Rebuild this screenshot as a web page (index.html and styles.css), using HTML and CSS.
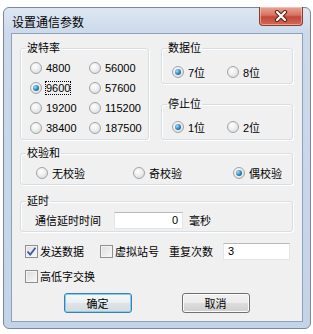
FILE: index.html
```html
<!DOCTYPE html>
<html lang="zh-CN">
<head>
    <meta charset="UTF-8">
    <meta name="viewport" content="width=device-width, initial-scale=1.0">
    <title>设置通信参数</title>
    <link rel="stylesheet" href="styles.css">
</head>
<body>
    <div class="window">
        <div class="titlebar">
            <span class="title">设置通信参数</span>
            <span class="close">
                <svg width="14" height="12" viewBox="0 0 14 12">
                    <path d="M3 2 L11 10 M11 2 L3 10" stroke="#5b2019" stroke-width="4.2" stroke-linecap="round"/>
                    <path d="M3 2 L11 10 M11 2 L3 10" stroke="#ffffff" stroke-width="2.2" stroke-linecap="round"/>
                </svg>
            </span>
        </div>

        <div class="client">
            <div class="top-row">
                <!-- 波特率 -->
                <fieldset class="group baud">
                    <legend>波特率</legend>
                    <div class="opts baud-opts">
                        <label class="opt"><span class="rb"></span>4800</label>
                        <label class="opt"><span class="rb"></span>56000</label>
                        <label class="opt"><span class="rb on"></span><span class="focus">9600</span></label>
                        <label class="opt"><span class="rb"></span>57600</label>
                        <label class="opt"><span class="rb"></span>19200</label>
                        <label class="opt"><span class="rb"></span>115200</label>
                        <label class="opt"><span class="rb"></span>38400</label>
                        <label class="opt"><span class="rb"></span>187500</label>
                    </div>
                </fieldset>

                <div class="side">
                    <fieldset class="group bits">
                        <legend>数据位</legend>
                        <div class="opts pair-opts">
                            <label class="opt"><span class="rb on"></span>7位</label>
                            <label class="opt"><span class="rb"></span>8位</label>
                        </div>
                    </fieldset>

                    <fieldset class="group stop">
                        <legend>停止位</legend>
                        <div class="opts pair-opts">
                            <label class="opt"><span class="rb on"></span>1位</label>
                            <label class="opt"><span class="rb"></span>2位</label>
                        </div>
                    </fieldset>
                </div>
            </div>

            <!-- 校验和 -->
            <fieldset class="group parity">
                <legend>校验和</legend>
                <div class="opts parity-opts">
                    <label class="opt"><span class="rb"></span>无校验</label>
                    <label class="opt"><span class="rb"></span>奇校验</label>
                    <label class="opt"><span class="rb on"></span>偶校验</label>
                </div>
            </fieldset>

            <!-- 延时 -->
            <fieldset class="group delay">
                <legend>延时</legend>
                <div class="delay-row">
                    <span>通信延时时间</span>
                    <span class="field delay-field">0</span>
                    <span class="unit">毫秒</span>
                </div>
            </fieldset>

            <div class="checks">
                <label class="chk"><span class="cb">
                    <svg width="11" height="11" viewBox="0 0 11 11"><path d="M1.5 5.5 L4.2 8.5 L9.5 1.8" fill="none" stroke="#3d5a9e" stroke-width="1.8"/></svg>
                </span>发送数据</label>
                <label class="chk virtual"><span class="cb"></span>虚拟站号</label>
                <span class="repeat">重复次数</span>
                <span class="field repeat-field">3</span>
            </div>

            <div class="checks second">
                <label class="chk"><span class="cb"></span>高低字交换</label>
            </div>

            <div class="buttons">
                <button type="button" class="btn default">确定</button>
                <button type="button" class="btn">取消</button>
            </div>
        </div>
    </div>
</body>
</html>
```

FILE: styles.css
```css
/* Общие стили */
body {
    margin: 0;
    background-color: #ffffff;
    font-family: "Liberation Sans", "Noto Sans CJK SC", sans-serif;
    font-size: 11px;
    color: #000000;
}

/* Окно */
.window {
    width: 306px;
    margin: 7px 0 0 3px;
    border: 1px solid #7c8898;
    border-radius: 6px;
    background: linear-gradient(#dde7f3 0, #cbd9ea 26px, #c4d4e8 100%);
    padding-bottom: 6px;
}

.titlebar {
    height: 25px;
    display: flex;
    justify-content: space-between;
    align-items: flex-start;
    padding: 0 7px 0 8px;
}

.title {
    font-size: 12px;
    line-height: 14px;
    margin-top: 8px;
}

.close {
    width: 42px;
    height: 18px;
    margin-top: -1px;
    display: flex;
    align-items: center;
    justify-content: center;
    border: 1px solid #8a3b31;
    border-top: none;
    border-radius: 0 0 4px 4px;
    background: linear-gradient(#e9a596 0, #d8735f 45%, #c4473a 55%, #d06a55 100%);
    box-shadow: inset 0 0 0 1px rgba(255, 220, 210, 0.5);
}

/* Клиентская область */
.client {
    margin: 0 7px;
    border: 1px solid #8ea1b8;
    background-color: #f0f0f0;
    padding: 8px 9px 8px 8px;
}

.top-row {
    display: grid;
    grid-template-columns: 129px 132px;
    column-gap: 12px;
}

.side {
    display: flex;
    flex-direction: column;
    gap: 14px;
}

/* Группы */
.group {
    margin: 0;
    padding: 0;
    min-width: 0;
    border: 1px solid #d5dfe5;
    border-radius: 3px;
    box-shadow: inset 1px 1px 0 #ffffff, 1px 1px 0 #ffffff;
}

.group legend {
    margin-left: 5px;
    padding: 0 1px;
    line-height: 13px;
}

.opts {
    display: grid;
}

.opt {
    display: flex;
    align-items: center;
    gap: 4px;
    height: 20px;
    white-space: nowrap;
}

.baud-opts {
    grid-template-columns: 59px auto;
    padding: 3px 0 0 9px;
}

.pair-opts {
    grid-template-columns: 55px auto;
    padding-left: 10px;
}

.bits .pair-opts {
    padding-top: 7px;
    padding-bottom: 1px;
}

.stop .pair-opts {
    padding-top: 6px;
    padding-bottom: 2px;
}

.parity {
    margin-top: 7px;
}

.parity-opts {
    grid-template-columns: 97px 100px auto;
    padding: 3px 0 1px 15px;
}

.focus {
    outline: 1px dotted #000000;
    line-height: 12px;
}

/* Радиокнопки */
.rb {
    position: relative;
    flex: none;
    width: 10px;
    height: 10px;
    border: 1px solid #a0a4a8;
    border-radius: 50%;
    background: radial-gradient(circle at 40% 35%, #ffffff 0, #eeeeee 45%, #d2d4d6 100%);
}

.rb.on::after {
    content: "";
    position: absolute;
    left: 2px;
    top: 2px;
    width: 6px;
    height: 6px;
    border-radius: 50%;
    background: radial-gradient(circle at 35% 35%, #a6e0fa 0, #2f8ac4 50%, #123f6b 100%);
}

/* Задержка */
.delay {
    margin-top: 10px;
}

.delay-row {
    display: flex;
    align-items: center;
    height: 18px;
    padding: 3px 0 2px 14px;
}

.field {
    box-sizing: border-box;
    height: 17px;
    line-height: 15px;
    background-color: #ffffff;
    border: 1px solid #e2e6ea;
    border-top-color: #b5b9be;
}

.delay-field {
    width: 69px;
    margin-left: 13px;
    text-align: right;
    padding-right: 4px;
}

.unit {
    margin-left: 6px;
}

/* Флажки */
.checks {
    display: flex;
    align-items: center;
    height: 16px;
    margin-top: 11px;
    padding-left: 5px;
}

.checks.second {
    margin-top: 9px;
}

.chk {
    display: flex;
    align-items: center;
    gap: 2px;
}

.cb {
    flex: none;
    width: 11px;
    height: 11px;
    border: 1px solid #8f8f8f;
    display: flex;
    align-items: center;
    justify-content: center;
    background: linear-gradient(135deg, #dcdcdc, #f8f8f8);
    box-shadow: inset 0 0 0 1px #f4f4f4;
}

.virtual {
    margin-left: 16px;
}

.repeat {
    margin-left: 10px;
}

.repeat-field {
    width: 67px;
    margin-left: 10px;
    padding-left: 4px;
}

/* Кнопки */
.buttons {
    display: flex;
    justify-content: center;
    gap: 50px;
    margin-top: 9px;
}

.btn {
    width: 68px;
    height: 20px;
    padding: 0;
    font-family: inherit;
    font-size: 11px;
    color: #000000;
    border: 1px solid #707070;
    border-radius: 3px;
    background: linear-gradient(#f2f2f2 0, #ebebeb 50%, #dddddd 51%, #cfcfcf 100%);
    box-shadow: inset 0 0 0 1px #fbfbfb;
}

.btn.default {
    border-color: #3c7fb1;
    background: linear-gradient(#f4f8fb 0, #eceff2 50%, #e0e4e8 51%, #d6dbe0 100%);
    box-shadow: inset 0 0 0 1px #7fd0f2;
}
```
